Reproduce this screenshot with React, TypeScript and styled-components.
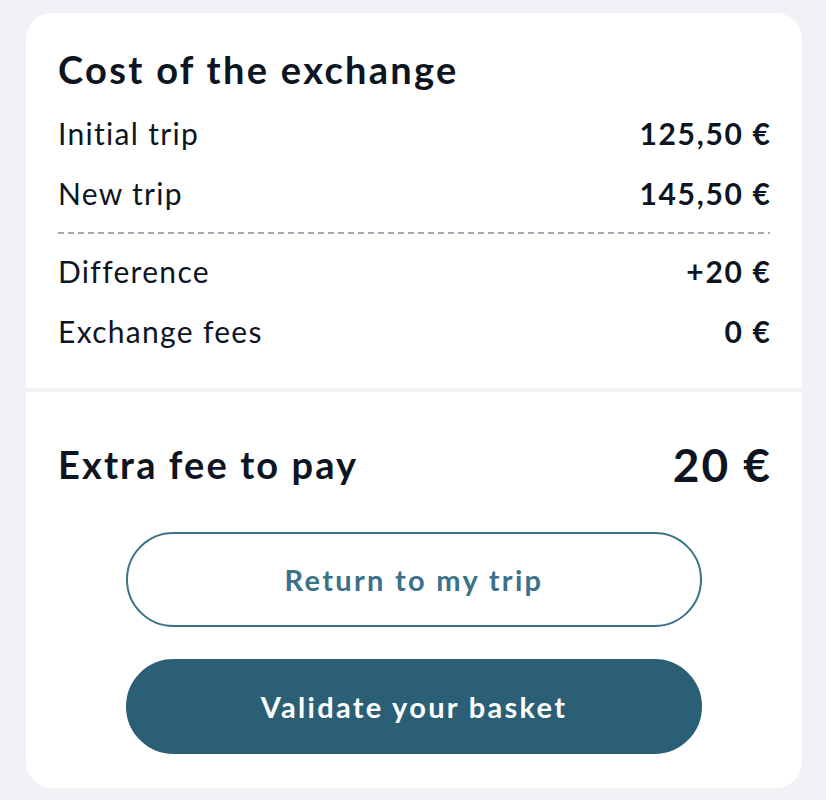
import React from "react";
import styled, { createGlobalStyle } from "styled-components";

const Global = createGlobalStyle`
  html, body { margin: 0; padding: 0; background: #f2f2f6; }
  body { font-family: "Lato", "Noto Sans", sans-serif; color: #0e1522; }
`;

const Page = styled.div`
  padding: 13px 24px 13px 26px;
`;

const Card = styled.div`
  width: 776px;
  background: #ffffff;
  border-radius: 26px;
  overflow: hidden;
  display: flex;
  flex-direction: column;
`;

const Section = styled.div<{ $top: number; $bottom: number }>`
  padding: ${(p) => p.$top}px 32px ${(p) => p.$bottom}px;
  display: flex;
  flex-direction: column;
`;

const Divider = styled.div`
  height: 4px;
  background: #f2f2f6;
`;

const Title = styled.h2`
  margin: 0 0 10px;
  font-size: 38px;
  line-height: 48px;
  font-weight: 700;
  letter-spacing: 2.3px;
`;

const Row = styled.div`
  display: flex;
  justify-content: space-between;
  align-items: center;
  height: 60px;
  font-size: 30px;
`;

const Label = styled.span`
  font-weight: 400;
  letter-spacing: 1.3px;
`;

const Value = styled.span`
  font-weight: 700;
  letter-spacing: 1.7px;
  margin-right: -1.7px;
`;

const Dashed = styled.div`
  height: 2px;
  margin: 9px 0 7px;
  background-image: linear-gradient(to right, #a3a6b1 0 6px, transparent 6px 10px);
  background-size: 10px 2px;
  background-repeat: repeat-x;
`;

const TotalRow = styled.div`
  display: flex;
  justify-content: space-between;
  align-items: center;
  height: 60px;
  margin-bottom: 38px;
`;

const TotalLabel = styled.span`
  font-size: 38px;
  font-weight: 700;
  letter-spacing: 2.1px;
`;

const TotalValue = styled.span`
  font-size: 46px;
  font-weight: 700;
  letter-spacing: 2px;
  margin-right: -2px;
`;

const Buttons = styled.div`
  display: flex;
  flex-direction: column;
  align-items: center;
  gap: 32px;
`;

const Button = styled.button<{ $primary?: boolean }>`
  width: 576px;
  height: 95px;
  border-radius: 48px;
  box-sizing: border-box;
  font-family: "Lato", "Noto Sans", sans-serif;
  font-size: 29px;
  font-weight: 700;
  letter-spacing: 2.3px;
  cursor: pointer;
  border: 2px solid ${(p) => (p.$primary ? "#2a5f75" : "#3b7189")};
  background: ${(p) => (p.$primary ? "#2a5f75" : "#ffffff")};
  color: ${(p) => (p.$primary ? "#ffffff" : "#3b7189")};
`;

export default function App() {
  return (
    <>
      <Global />
      <Page>
        <Card>
          <Section $top={32} $bottom={27}>
            <Title>Cost of the exchange</Title>
            <Row>
              <Label>Initial trip</Label>
              <Value>125,50 €</Value>
            </Row>
            <Row>
              <Label>New trip</Label>
              <Value>145,50 €</Value>
            </Row>
            <Dashed />
            <Row>
              <Label>Difference</Label>
              <Value>+20 €</Value>
            </Row>
            <Row>
              <Label>Exchange fees</Label>
              <Value>0 €</Value>
            </Row>
          </Section>
          <Divider />
          <Section $top={42} $bottom={34}>
            <TotalRow>
              <TotalLabel>Extra fee to pay</TotalLabel>
              <TotalValue>20 €</TotalValue>
            </TotalRow>
            <Buttons>
              <Button>Return to my trip</Button>
              <Button $primary>Validate your basket</Button>
            </Buttons>
          </Section>
        </Card>
      </Page>
    </>
  );
}
